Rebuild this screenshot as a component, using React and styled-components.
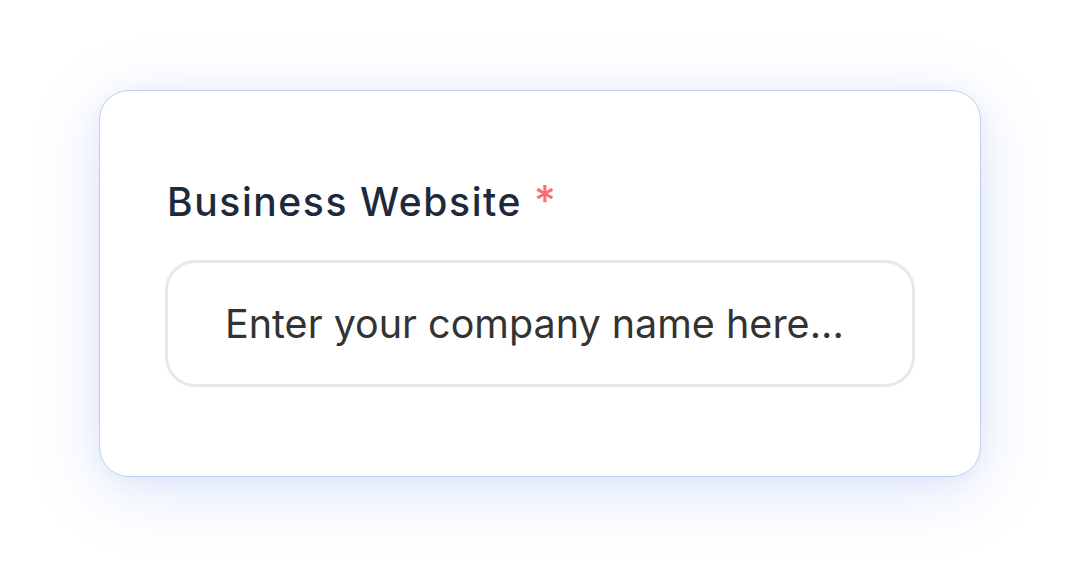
import React from "react";
import styled, { createGlobalStyle } from "styled-components";

const Global = createGlobalStyle`
  html, body { margin: 0; padding: 0; background: #ffffff; }
  body { width: 1080px; height: 585px; overflow: hidden; }
  * { box-sizing: border-box; }
`;

const Page = styled.div`
  width: 1080px;
  height: 585px;
  display: flex;
  align-items: flex-start;
  padding: 90px 0 0 99px;
  background: #ffffff;
`;

const Card = styled.div`
  width: 882px;
  height: 387px;
  background: #ffffff;
  border: 1.5px solid #bcd0f1;
  border-radius: 30px;
  box-shadow: 0 14px 70px rgba(70, 120, 220, 0.18), 0 4px 20px rgba(70, 120, 220, 0.07);
  padding: 84px 65px 0 65px;
  display: flex;
  flex-direction: column;
  gap: 32px;
`;

const Label = styled.label`
  display: flex;
  align-items: baseline;
  gap: 12px;
  padding-left: 2px;
  font-family: "Inter", "Liberation Sans", sans-serif;
  font-weight: 500;
  font-size: 39px;
  letter-spacing: 1.6px;
  line-height: 52px;
  color: #1e293b;
`;

const Required = styled.span`
  color: #f87171;
  font-size: 42px;
  letter-spacing: 0;
`;

const Input = styled.input`
  width: 750px;
  height: 127px;
  border: 3px solid #e8e8e8;
  border-radius: 30px;
  padding: 0 0 0 57px;
  background: #ffffff;
  font-family: "Inter", "Liberation Sans", sans-serif;
  font-size: 39.5px;
  color: #333333;
  outline: none;
  &::placeholder {
    color: #333333;
    opacity: 1;
  }
`;

export default function App() {
  return (
    <>
      <Global />
      <Page>
        <Card>
          <Label>
            Business Website <Required>*</Required>
          </Label>
          <Input placeholder="Enter your company name here..." />
        </Card>
      </Page>
    </>
  );
}
